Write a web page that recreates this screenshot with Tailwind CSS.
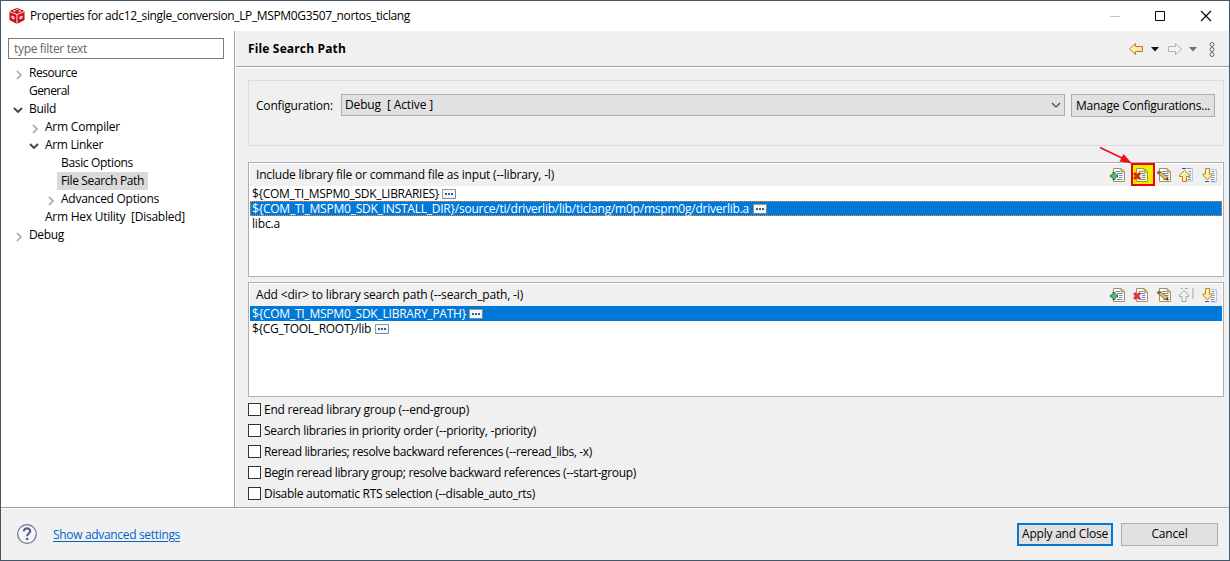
<!DOCTYPE html>
<html lang="en">
<head>
<meta charset="utf-8">
<title>Properties</title>
<script src="https://cdn.jsdelivr.net/npm/@tailwindcss/browser@4"></script>
</head>
<body class="font-['Open_Sans',sans-serif] text-[12px] text-black">
<svg class="absolute h-0 w-0">
  <defs>
    <linearGradient id="gold" x1="0" y1="0" x2="1" y2="1"><stop offset="0" stop-color="#fffbe0"/><stop offset="1" stop-color="#fbdc7c"/></linearGradient>
    <symbol id="doc" viewBox="0 0 16 16">
      <path d="M3.500 1.500H11L14.500 5V14.500H3.500z" fill="#fff" fill-opacity=".7" stroke="#a88f52"/>
      <path d="M11 1.500V5H14.500z" fill="#e3bd6a" stroke="#a88f52" stroke-width=".8"/>
      <path d="M6 4.500H10M7 6.500H12.500M9 8.500H12.500M9 10.500H12.500M7 12.500H12.500" stroke="#6d8dbb" fill="none"/>
    </symbol>
    <symbol id="add" viewBox="0 0 16 16">
      <use href="#doc"/>
      <path d="M2.500 5H5.500V7.500H8V10.500H5.500V13H2.500V10.500H0V7.500H2.500z" fill="#1c7a3e"/>
      <path d="M4 6V12M1 9H7" stroke="#8fd69a" stroke-width="1"/>
    </symbol>
    <symbol id="del" viewBox="0 0 16 16">
      <use href="#doc"/>
      <path d="M1 6L7 12M7 6L1 12" stroke="currentColor" stroke-width="3"/>
    </symbol>
    <symbol id="edit" viewBox="0 0 16 16">
      <use href="#doc"/>
      <path d="M1 5.500L3.500 4L11.500 10L12 13L9 12.500z" fill="#e7bd64" stroke="#80622b" stroke-width=".8"/>
      <path d="M.500 5.500L3.500 4L5 5.500L3 7.500z" fill="#666"/><path d="M9.500 12L12.500 13.500L11.500 10.500z" fill="#333"/>
    </symbol>
    <symbol id="up" viewBox="0 0 16 16">
      <path d="M8 1.500H13.500V14H8" fill="#f2f5fa" stroke="#b9c6dc"/>
      <path d="M3 1.500H7" stroke="#304f88"/><path d="M8 1.500H12M9.500 4.500H12M10.500 6.500H12M10.500 8.500H12M9.500 10.500H12M8.500 12.500H12" stroke="#7c97c0"/>
      <path d="M5.500 3.500L10.500 8V9.500H7.500V14.500H3.500V9.500H.500V8z" fill="url(#gold)" stroke="#b98518"/>
    </symbol>
    <symbol id="upoff" viewBox="0 0 16 16">
      <path d="M2 1.500H4M6 1.500H9M14 1V12" stroke="#a6a6a6"/>
      <path d="M5 3.500L9.500 8V9.500H7V14.500H3V9.500H.500V8z" fill="#f2f2f2" stroke="#a6a6a6"/>
    </symbol>
    <symbol id="down" viewBox="0 0 16 16">
      <path d="M9 2.500H14.500V15H9" fill="#f2f5fa" stroke="#b9c6dc"/>
      <path d="M3 14.500H7" stroke="#304f88"/><path d="M9.500 4.500H12.500M10.500 6.500H12.500M10.500 8.500H12.500M9.500 10.500H12.500M8.500 12.500H12.500M9 14.500H13" stroke="#7c97c0"/>
      <path d="M5.500 12.500L10 8.500V7H7.500V1.500H3.500V7H1V8.500z" fill="url(#gold)" stroke="#b98518"/>
    </symbol>
    <symbol id="dots" viewBox="0 0 14 10">
      <path d="M.500 .500H13.500V9.500H.500z" fill="#f2f8ff" stroke="#7188a6"/>
      <path d="M.500 9V.500H13.500" fill="none" stroke="#a09c70"/>
      <path d="M3 4h2v2h-2zM6 4h2v2h-2zM9 4h2v2h-2z" fill="#3c5c91"/>
    </symbol>
    <symbol id="closed" viewBox="0 0 8 10"><path d="M2 1L6 5L2 9" fill="none" stroke="#a6a6a6" stroke-width="1.600"/></symbol>
    <symbol id="open" viewBox="0 0 10 8"><path d="M1 2L5 6L9 2" fill="none" stroke="#404040" stroke-width="1.800"/></symbol>
  </defs>
</svg>
<div class="flex h-[561px] w-[1230px] flex-col overflow-hidden border border-[#44586c] bg-[#f0f0f0] whitespace-nowrap">
  <header class="flex h-[30px] shrink-0 items-center bg-white pl-2">
    <svg class="h-4 w-4" viewBox="0 0 16 16"><path d="M8 0L15.500 3V12L8 16L.500 12V3z" fill="#cf1018"/><path d="M.500 3.500L8 6.500L15.500 3.500M8 6.500V16" stroke="#fff" stroke-width=".9" fill="none"/><path d="M4 2.800L6 2L7 3L5 3.800zM9 3L11 2.200L12.500 3L10.500 3.900zM7 1.200h2v.800H7z" fill="#fff"/><path d="M3 8L5 8.900V11L3 10z" fill="none" stroke="#fff"/><path d="M11 8.900L13 8V10L11 11z" fill="none" stroke="#fff"/></svg>
    <span class="ml-[5px] tracking-[-0.364px]">Properties for adc12_single_conversion_LP_MSPM0G3507_nortos_ticlang</span>
    <svg class="mr-[16px] ml-auto h-[12px] w-[104px]" viewBox="0 0 104 12" fill="none"><path d="M1 6.500H11" stroke="#c5c5c5"/><path d="M46.500 1.500H55.500V10.500H46.500z" stroke="#000"/><path d="M92 1L102 11M102 1L92 11" stroke="#000" stroke-width="1.100"/></svg>
  </header>
  <div class="flex h-[476px] shrink-0">
    <aside class="w-[234px] shrink-0 border-r border-[#a0a0a0] bg-white pt-[7px] pl-[7px]">
      <div class="mb-[5px] flex h-[21px] w-[216px] items-center border border-[#7a7a7a] pl-[5px] tracking-[-0.325px] text-[#666]">type filter text</div>
      <ul>
        <li class="flex h-[18px] items-center"><svg class="mt-[3px] mr-[6px] ml-[7px] h-[10px] w-2"><use href="#closed"/></svg><span class="tracking-[-0.48px]">Resource</span></li>
        <li class="flex h-[18px] items-center pl-[21px] tracking-[-0.55px]">General</li>
        <li class="flex h-[18px] items-center"><svg class="mt-[2px] mr-[6px] ml-[5px] h-2 w-[10px]"><use href="#open"/></svg><span class="tracking-[-0.303px]">Build</span></li>
        <li class="flex h-[18px] items-center pl-4"><svg class="mt-[3px] mr-[6px] ml-[7px] h-[10px] w-2"><use href="#closed"/></svg><span class="tracking-[-0.221px]">Arm Compiler</span></li>
        <li class="flex h-[18px] items-center pl-4"><svg class="mt-[2px] mr-[6px] ml-[5px] h-2 w-[10px]"><use href="#open"/></svg><span class="tracking-[-0.333px]">Arm Linker</span></li>
        <li class="flex h-[18px] items-center pl-[53px] tracking-[-0.332px]">Basic Options</li>
        <li class="flex h-[18px] items-center pl-[49px]"><span class="h-[18px] w-[91px] bg-[#d9d9d9] pl-1 leading-[18px] tracking-[-0.359px]">File Search Path</span></li>
        <li class="flex h-[18px] items-center pl-8"><svg class="mt-[3px] mr-[6px] ml-[7px] h-[10px] w-2"><use href="#closed"/></svg><span class="tracking-[-0.262px]">Advanced Options</span></li>
        <li class="flex h-[18px] items-center pl-[37px]"><span class="whitespace-pre tracking-[-0.251px]">Arm Hex Utility  [Disabled]</span></li>
        <li class="flex h-[18px] items-center"><svg class="mt-[3px] mr-[6px] ml-[7px] h-[10px] w-2"><use href="#closed"/></svg><span class="tracking-[-0.334px]">Debug</span></li>
      </ul>
    </aside>
    <main class="flex min-w-0 flex-1 flex-col border-l border-white">
      <div class="flex h-[36px] shrink-0 items-center border-b border-[#a0a0a0] pl-3 shadow-[0_1px_0_#fff]">
        <h1 class="pt-px text-[12px] font-bold tracking-[0.15px]">File Search Path</h1>
        <svg class="mr-[13px] ml-auto h-4 w-[88px]" viewBox="0 0 88 16" fill="none">
          <path d="M1.500 8L7.500 2.500V5.500H14.500V10.500H7.500V13.500z" fill="url(#gold)" stroke="#bb7d16" stroke-linejoin="round"/>
          <path d="M23 6H31L27 10.500z" fill="#111"/>
          <path d="M53.500 8L47.500 2.500V5.500H40.500V10.500H47.500V13.500z" fill="#f4f4f4" stroke="#b0b0b0" stroke-linejoin="round"/>
          <path d="M61 6H69L65 10.500z" fill="#707070"/>
          <g stroke="#6b6b6b"><circle cx="84" cy="3.500" r="2"/><circle cx="84" cy="8.500" r="2"/><circle cx="84" cy="13.500" r="2"/></g>
        </svg>
      </div>
      <div class="mt-[13px] ml-3 flex h-[66px] w-[976px] shrink-0 items-start border border-[#dcdcdc] pt-[13px] pl-[7px]">
        <span class="w-[85px] pt-[3px] tracking-[-0.192px]">Configuration:</span>
        <div class="flex h-[22px] w-[724px] items-center border border-[#adadad] bg-[#e1e1e1] pl-[3px]"><span class="whitespace-pre tracking-[-0.139px]">Debug  [ Active ]</span><svg class="mr-[3px] ml-auto h-[10px] w-[10px]" viewBox="0 0 10 10"><path d="M1 3L5 7L9 3" fill="none" stroke="#444" stroke-width="1.100"/></svg></div>
        <button class="ml-[6px] h-[23px] w-[144px] border border-[#adadad] bg-[#e1e1e1] tracking-[-0.232px]">Manage Configurations...</button>
      </div>
      <section class="mt-4 ml-3 h-[115px] w-[976px] shrink-0 border border-[#abadb3] bg-white p-px">
        <div class="flex h-[22px] items-center bg-[#f0f0f0] pl-[6px]">
          <span class="tracking-[-0.191px]">Include library file or command file as input (--library, -l)</span>
          <div class="mr-[4px] ml-auto flex items-center gap-[7px]">
            <svg class="h-4 w-4"><use href="#add"/></svg>
            <div class="relative h-4 w-4">
              <div class="absolute -top-[4px] -left-[2px] flex h-[23px] w-[24px] items-center border-2 border-[#f00505] bg-[#f0ee00] text-[#d02c08]"><svg class="h-4 w-4"><use href="#del"/></svg></div>
              <svg class="absolute -top-[21px] -left-[37px] h-[21px] w-[37px]" viewBox="0 0 37 21"><path d="M4 1.500L27 12.500" stroke="#e8141c" stroke-width="1.800"/><path d="M36 17.500L23.500 15.500L27.500 8z" fill="#e8141c"/></svg>
            </div>
            <svg class="h-4 w-4"><use href="#edit"/></svg>
            <svg class="h-4 w-4"><use href="#up"/></svg>
            <svg class="h-4 w-4"><use href="#down"/></svg>
          </div>
        </div>
        <div class="leading-[15px]">
          <div class="flex h-[15px] items-center pl-[2px]"><span class="w-[190px] tracking-[-0.303px]">${COM_TI_MSPM0_SDK_LIBRARIES}</span><svg class="h-[10px] w-[14px]"><use href="#dots"/></svg></div>
          <div class="flex h-[15px] items-center bg-[#0078d7] pl-[2px] text-white outline outline-1 -outline-offset-1 outline-dotted outline-[#ff8728]"><span class="w-[501px] tracking-[-0.226px]">${COM_TI_MSPM0_SDK_INSTALL_DIR}/source/ti/driverlib/lib/ticlang/m0p/mspm0g/driverlib.a</span><svg class="h-[10px] w-[14px]"><use href="#dots"/></svg></div>
          <div class="h-[15px] pl-[2px] tracking-[-0.161px]">libc.a</div>
        </div>
      </section>
      <section class="mt-[5px] ml-3 h-[115px] w-[976px] shrink-0 border border-[#abadb3] bg-white p-px">
        <div class="flex h-[22px] items-center bg-[#f0f0f0] pl-[6px]">
          <span class="tracking-[-0.175px]">Add &lt;dir&gt; to library search path (--search_path, -i)</span>
          <div class="mr-[4px] ml-auto flex items-center gap-[7px] text-[#d93647]">
            <svg class="h-4 w-4"><use href="#add"/></svg>
            <svg class="h-4 w-4"><use href="#del"/></svg>
            <svg class="h-4 w-4"><use href="#edit"/></svg>
            <svg class="h-4 w-4"><use href="#upoff"/></svg>
            <svg class="h-4 w-4"><use href="#down"/></svg>
          </div>
        </div>
        <div class="leading-[15px]">
          <div class="flex h-[15px] items-center bg-[#0078d7] pl-[2px] text-white"><span class="w-[217px] tracking-[-0.232px]">${COM_TI_MSPM0_SDK_LIBRARY_PATH}</span><svg class="h-[10px] w-[14px]"><use href="#dots"/></svg></div>
          <div class="flex h-[15px] items-center pl-[2px]"><span class="w-[123px] tracking-[-0.299px]">${CG_TOOL_ROOT}/lib</span><svg class="h-[10px] w-[14px]"><use href="#dots"/></svg></div>
        </div>
      </section>
      <div class="mt-[2px] ml-3">
        <label class="flex h-[21px] items-center gap-[3px]"><i class="h-[13px] w-[13px] border border-[#333] bg-white"></i><span class="tracking-[-0.232px]">End reread library group (--end-group)</span></label>
        <label class="flex h-[21px] items-center gap-[3px]"><i class="h-[13px] w-[13px] border border-[#333] bg-white"></i><span class="tracking-[-0.267px]">Search libraries in priority order (--priority, -priority)</span></label>
        <label class="flex h-[21px] items-center gap-[3px]"><i class="h-[13px] w-[13px] border border-[#333] bg-white"></i><span class="tracking-[-0.354px]">Reread libraries; resolve backward references (--reread_libs, -x)</span></label>
        <label class="flex h-[21px] items-center gap-[3px]"><i class="h-[13px] w-[13px] border border-[#333] bg-white"></i><span class="tracking-[-0.324px]">Begin reread library group; resolve backward references (--start-group)</span></label>
        <label class="flex h-[21px] items-center gap-[3px]"><i class="h-[13px] w-[13px] border border-[#333] bg-white"></i><span class="tracking-[-0.291px]">Disable automatic RTS selection (--disable_auto_rts)</span></label>
      </div>
    </main>
  </div>
  <footer class="flex flex-1 items-center border-t border-[#a0a0a0] pl-[16px] shadow-[inset_0_1px_0_#fff]">
    <svg class="h-5 w-5" viewBox="0 0 20 20"><circle cx="10" cy="10" r="9.300" fill="#f4f6fa" stroke="#66758f" stroke-width="1.200"/><path d="M6.800 7.500C6.800 3.200 13.400 3.600 13.200 7.200C13.100 9.300 10.100 9.300 10.100 12.200" fill="none" stroke="#4f6287" stroke-width="2.100"/><circle cx="10.100" cy="15" r="1.300" fill="#4f6287"/></svg>
    <a class="ml-4 pt-px tracking-[-0.327px] text-[#0066cc] underline underline-offset-2">Show advanced settings</a>
    <button class="ml-auto h-[23px] w-[96px] border-2 border-[#0078d7] bg-[#e1e1e1] tracking-[-0.212px]">Apply and Close</button>
    <button class="mr-[11px] ml-2 h-[23px] w-[97px] border border-[#adadad] bg-[#e1e1e1] tracking-[-0.185px]">Cancel</button>
  </footer>
</div>
</body>
</html>
